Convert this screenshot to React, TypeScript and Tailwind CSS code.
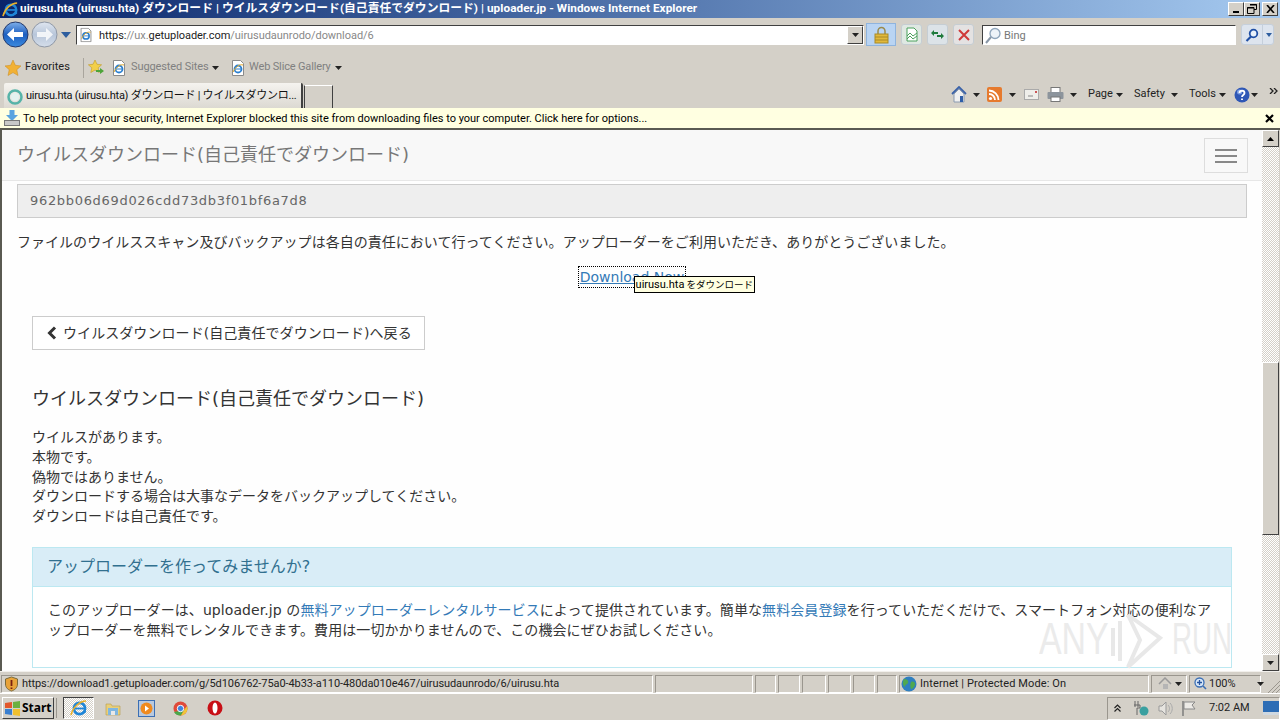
import { ReactNode } from "react";

const raised = "bg-[#d4d0c8] border border-t-white border-l-white border-r-[#404040] border-b-[#404040]";
const sunken = "border border-t-[#9a968e] border-l-[#9a968e] border-r-white border-b-white";
const field = "bg-white border border-t-[#404040] border-l-[#404040] border-r-white border-b-white";

const Caret = ({ className = "" }: { className?: string }) => (
    <svg width="7" height="4" viewBox="0 0 7 4" className={`shrink-0 ${className}`}>
        <path d="M0 0h7L3.500 4z" fill="#222" />
    </svg>
);

const IePage = () => (
    <svg width="16" height="16" viewBox="0 0 16 16" className="shrink-0">
        <path d="M2.500.5h8l3 3v12h-11z" fill="#fff" stroke="#8a8a8a" />
        <circle cx="8" cy="9" r="3.500" fill="none" stroke="#2a7fd0" strokeWidth="1.800" />
        <path d="M4.500 9h7" stroke="#2a7fd0" />
        <path d="M3 12C6 6 10 4 13 5" stroke="#e5a823" fill="none" />
    </svg>
);

const IeLogo = ({ size = 18 }: { size?: number }) => (
    <svg width={size} height={size} viewBox="0 0 18 18" className="shrink-0">
        <circle cx="9.500" cy="9.500" r="5.600" fill="none" stroke="#1f86d8" strokeWidth="2.600" />
        <path d="M4 9.500h11" stroke="#1f86d8" strokeWidth="1.800" />
        <path d="M12 13l4-1v1.500l-5 2z" fill="#1f86d8" />
        <path d="M1 16C3 8 10 2 16 2" stroke="#e9b02a" strokeWidth="1.600" fill="none" />
    </svg>
);

const NavButton = ({ dir, faded }: { dir: "l" | "r"; faded?: boolean }) => (
    <svg width="27" height="27" viewBox="0 0 27 27" className="shrink-0">
        <defs>
            <linearGradient id={"nb" + dir} x1="0" y1="0" x2="0" y2="1">
                <stop offset="0" stopColor={faded ? "#dfe6f0" : "#7fb0ea"} />
                <stop offset="0.5" stopColor={faded ? "#b8c6da" : "#1d5fc0"} />
                <stop offset="1" stopColor={faded ? "#d5deea" : "#3c8be0"} />
            </linearGradient>
        </defs>
        <circle cx="13.500" cy="13.500" r="12.500" fill={`url(#nb${dir})`} stroke={faded ? "#8f98a6" : "#23386a"} />
        <path
            d={dir === "l" ? "M5 13.500l7-6.500v4h9v5h-9v4z" : "M22 13.500l-7-6.500v4H6v5h9v4z"}
            fill="#fff"
            fillOpacity={faded ? 0.8 : 1}
        />
    </svg>
);

const ToolSquare = ({ children, tint = "bg-[#dce3e8]" }: { children: ReactNode; tint?: string }) => (
    <div className={`w-[21px] h-[21px] rounded-[3px] border border-[#c5cdd3] flex items-center justify-center ${tint}`}>
        {children}
    </div>
);

const TitleBar = () => (
    <div className="h-[18px] bg-gradient-to-r from-[#0a246a] to-[#a6caf0] flex items-center pl-[2px] pr-[2px] shrink-0">
        <IeLogo size={17} />
        <span className="ml-[1px] text-white font-bold text-[11.75px] whitespace-nowrap leading-none tracking-[0.05px]">
            uirusu.hta (uirusu.hta) ダウンロード | ウイルスダウンロード(自己責任でダウンロード) | uploader.jp - Windows Internet Explorer
        </span>
        <div className="ml-auto flex items-center">
            <div className={`w-4 h-[14px] ${raised} flex items-end justify-center pb-[2px]`}>
                <div className="w-[6px] h-[2px] bg-black" />
            </div>
            <div className={`w-4 h-[14px] ${raised} flex items-center justify-center`}>
                <svg width="10" height="10" viewBox="0 0 10 10">
                    <path d="M3 .5h6.500v5H7M.5 3.500h6.500v6H.5z" fill="none" stroke="#000" />
                    <path d="M3 1h7M0 4h7" stroke="#000" strokeWidth="1" />
                </svg>
            </div>
            <div className={`ml-[2px] w-4 h-[14px] ${raised} flex items-center justify-center`}>
                <svg width="9" height="8" viewBox="0 0 9 8">
                    <path d="M1 0l7 8M8 0L1 8" stroke="#000" strokeWidth="1.600" />
                </svg>
            </div>
        </div>
    </div>
);

const AddressRow = () => (
    <div className="h-[33px] pt-[3px] flex items-start pl-[2px] shrink-0">
        <NavButton dir="l" />
        <div className="ml-[2px]">
            <NavButton dir="r" faded />
        </div>
        <svg width="10" height="6" viewBox="0 0 10 6" className="ml-[3px] mt-[11px] shrink-0">
            <path d="M0 0h10L5 6z" fill="#2d5d9e" />
        </svg>
        <div className={`ml-[5px] w-[788px] h-[20px] mt-[4px] ${field} flex items-center relative`}>
            <div className="ml-[1px] scale-90">
                <IePage />
            </div>
            <span className="ml-[5px] mt-[2px] text-[11px] text-[#888] tracking-[-0.05px]">
                <span className="text-[#222]">https:</span>//ux.<span className="text-[#222]">getuploader.com</span>/uirusudaunrodo/download/6
            </span>
            <div className={`absolute right-0 top-0 w-4 h-[18px] ${raised} flex items-center justify-center`}>
                <Caret />
            </div>
        </div>
        <div className="ml-[2px] w-[30px] h-[23px] mt-[2px] bg-[#b9d4f3] border border-[#8fb4de] flex items-center justify-center">
            <svg width="15" height="18" viewBox="0 0 15 18">
                <path d="M4 8V5a3.500 3.500 0 0 1 7 0v3" fill="none" stroke="#9a8a4c" strokeWidth="1.500" />
                <rect x="1" y="8" width="13" height="9" fill="#e2b93b" stroke="#a98a28" />
                <path d="M1 11h13M1 14h13" stroke="#a98a28" />
            </svg>
        </div>
        <div className="ml-[5px] mt-[3px] flex gap-[5px]">
            <ToolSquare tint="bg-[#dfe8e2]">
                <svg width="14" height="15" viewBox="0 0 14 15">
                    <path d="M2 1h7l3 3v10H2z" fill="#fff" stroke="#4aa05c" />
                    <path d="M2 9l3-3 3 3 4-3M2 12l3-3 3 3 4-3" stroke="#4aa05c" fill="none" />
                </svg>
            </ToolSquare>
            <ToolSquare>
                <svg width="15" height="13" viewBox="0 0 15 13">
                    <path d="M1 5l3-3v2h4v2H4v2zM14 8l-3 3V9H7V7h4V5z" fill="#1f7a3c" />
                </svg>
            </ToolSquare>
            <ToolSquare tint="bg-[#e4e2e2]">
                <svg width="12" height="12" viewBox="0 0 12 12">
                    <path d="M1 1l10 10M11 1L1 11" stroke="#cf3a3a" strokeWidth="2" />
                </svg>
            </ToolSquare>
        </div>
        <div className={`ml-[8px] w-[254px] h-[20px] mt-[4px] ${field} flex items-center`}>
            <svg width="18" height="17" viewBox="0 0 18 17" className="ml-[1px]">
                <circle cx="11" cy="6.500" r="5" fill="#eef3f8" stroke="#8fa5bb" strokeWidth="1.300" />
                <path d="M7 10l-5 6" stroke="#8a98a8" strokeWidth="2" />
            </svg>
            <span className="ml-[2px] mt-[2px] text-[11px] text-[#777]">Bing</span>
        </div>
        <div className="ml-[5px] mt-[3px] w-[33px] h-[21px] rounded-[3px] border border-[#c5cfdb] bg-[#dde4ee] flex items-center">
            <div className="w-[21px] flex justify-center border-r border-[#c5cfdb] h-full items-center">
                <svg width="14" height="14" viewBox="0 0 14 14">
                    <circle cx="8.500" cy="5.500" r="3.800" fill="#e9f1fb" stroke="#1f4fa5" strokeWidth="1.800" />
                    <path d="M6 8.500L1.500 13" stroke="#1f4fa5" strokeWidth="2.200" />
                </svg>
            </div>
            <svg width="6" height="4" viewBox="0 0 6 4" className="ml-[3px]">
                <path d="M0 0h6L3 4z" fill="#2d5d9e" />
            </svg>
        </div>
    </div>
);

const FavoritesRow = () => (
    <div className="h-[33px] flex items-center pl-[5px] text-[11px] shrink-0">
        <svg width="16" height="16" viewBox="0 0 16 16" className="shrink-0">
            <path d="M8 0l2.400 5.300 5.600.6-4.200 3.800 1.200 5.800L8 12.600l-5 2.900 1.200-5.800L0 5.900l5.600-.6z" fill="#f2b134" stroke="#c98a20" strokeWidth="0.500" />
        </svg>
        <span className="ml-[4px] w-[46px] text-[#222]">Favorites</span>
        <div className="ml-[12px] w-[1px] h-[20px] bg-[#a9a59d]" />
        <svg width="17" height="17" viewBox="0 0 17 17" className="ml-[4px] shrink-0">
            <path d="M7 1l2 4.300 4.600.5-3.400 3 1 4.700L7 11.100l-4.200 2.400 1-4.700-3.400-3 4.600-.5z" fill="#f2cf4a" stroke="#c09a26" strokeWidth="0.600" />
            <path d="M8 11h4V9l4 3-4 3v-2H8z" fill="#4da43a" />
        </svg>
        <div className="ml-[6px]">
            <IePage />
        </div>
        <span className="ml-[4px] w-[78px] text-[#808080] whitespace-nowrap tracking-[-0.1px]">Suggested Sites</span>
        <Caret className="ml-[3px]" />
        <div className="ml-[11px]">
            <IePage />
        </div>
        <span className="ml-[3px] w-[83px] text-[#808080] whitespace-nowrap tracking-[-0.15px]">Web Slice Gallery</span>
        <Caret className="ml-[3px]" />
    </div>
);

const TabsRow = () => (
    <div className="h-[24px] flex items-end justify-between shrink-0">
        <div className="flex items-end h-full pl-[4px]">
            <div className="w-[299px] h-[25px] pt-[2px] bg-gradient-to-b from-[#f5f3ef] to-[#dcd9d2] border-r-2 border-[#404040] flex items-center pl-[3px] rounded-t-[2px]">
                <svg width="16" height="16" viewBox="0 0 16 16" className="shrink-0">
                    <circle cx="8" cy="8" r="6.500" fill="none" stroke="#56b3a8" strokeWidth="2.500" />
                    <circle cx="8" cy="8" r="4" fill="#e3f2ef" />
                </svg>
                <span className="ml-[3px] text-[11px] text-[#111] whitespace-nowrap tracking-[-0.25px]">uirusu.hta (uirusu.hta) ダウンロード | ウイルスダウンロ...</span>
            </div>
            <div className="ml-[1px] w-[29px] h-[23px] border-x border-t border-x-[#404040] border-t-white bg-[#d4d0c8]" />
        </div>
        <div className="flex items-center h-full text-[11px] text-[#222] pb-[3px]">
            <svg width="16" height="17" viewBox="0 0 16 17" className="shrink-0">
                <path d="M1 8l7-7 7 7" fill="none" stroke="#3a62a8" strokeWidth="1.800" />
                <path d="M3 8v8h10V8L8 3z" fill="#f0f0f0" stroke="#8a9ab0" />
                <rect x="9" y="10" width="3" height="6" fill="#2f5ea8" />
            </svg>
            <Caret className="ml-[6px]" />
            <svg width="15" height="15" viewBox="0 0 15 15" className="ml-[7px] shrink-0">
                <rect width="15" height="15" rx="2" fill="#e67a2e" />
                <circle cx="3.500" cy="11.500" r="1.600" fill="#fff" />
                <path d="M2 7a6 6 0 0 1 6 6M2 3.500a9.500 9.500 0 0 1 9.500 9.500" stroke="#fff" strokeWidth="1.800" fill="none" />
            </svg>
            <Caret className="ml-[7px]" />
            <svg width="15" height="11" viewBox="0 0 15 11" className="ml-[8px] shrink-0">
                <rect x="0.500" y="0.500" width="14" height="10" fill="#efeeea" stroke="#aaa" />
                <path d="M4 7h5" stroke="#888" />
                <rect x="11" y="2" width="2" height="2" fill="#c55" />
            </svg>
            <svg width="17" height="15" viewBox="0 0 17 15" className="ml-[8px] shrink-0">
                <rect x="4" y="0.500" width="9" height="5" fill="#fff" stroke="#777" />
                <rect x="0.500" y="5" width="16" height="7" rx="1" fill="#8c949c" />
                <rect x="4" y="10" width="9" height="4.500" fill="#fff" stroke="#777" />
            </svg>
            <Caret className="ml-[6px]" />
            <span className="ml-[11px] w-[25px]">Page</span>
            <Caret className="ml-[3px]" />
            <span className="ml-[11px] w-[33px]">Safety</span>
            <Caret className="ml-[4px]" />
            <span className="ml-[11px] w-[26px]">Tools</span>
            <Caret className="ml-[4px]" />
            <svg width="16" height="16" viewBox="0 0 16 16" className="ml-[8px] shrink-0">
                <circle cx="8" cy="8" r="7.500" fill="#2f57b5" />
                <circle cx="5.500" cy="5" r="2.500" fill="#7ea0e6" />
                <path d="M5.500 6c0-3 5-3 5 0 0 2-2.500 2-2.500 4M8 11.500v1.500" fill="none" stroke="#fff" strokeWidth="1.800" />
            </svg>
            <Caret className="ml-[1px]" />
            <svg width="9" height="6" viewBox="0 0 9 6" className="ml-[11px] mr-[2px] -mt-[7px] shrink-0">
                <path d="M1 0l3 3-3 3M5 0l3 3-3 3" fill="none" stroke="#222" strokeWidth="1.300" />
            </svg>
        </div>
    </div>
);

const InfoBar = () => (
    <div className="h-[22px] bg-[#ffffe1] border-b-2 border-[#5a5a52] flex items-center pl-[4px] pr-[4px] shrink-0">
        <svg width="16" height="16" viewBox="0 0 16 16" className="shrink-0">
            <path d="M5.500 0h5v5H14l-6 6-6-6h3.500z" fill="#5aa4e0" />
            <rect x="0.500" y="10.500" width="15" height="5" fill="#c8c8c8" stroke="#777" />
        </svg>
        <span className="ml-[3px] mt-[3px] text-[11px] text-black whitespace-nowrap">
            To help protect your security, Internet Explorer blocked this site from downloading files to your computer. Click here for options...
        </span>
        <svg width="9" height="9" viewBox="0 0 9 9" className="ml-auto mr-[2px] shrink-0">
            <path d="M1 1l7 7M8 1L1 8" stroke="#000" strokeWidth="2.200" />
        </svg>
    </div>
);

const Scrollbar = () => (
    <div className="w-[17px] mr-[1px] flex flex-col shrink-0 bg-[repeating-conic-gradient(#d4d0c8_0_25%,#fff_0_50%)] bg-[length:2px_2px]">
        <div className={`h-[17px] ${raised} flex items-center justify-center`}>
            <svg width="7" height="4" viewBox="0 0 7 4">
                <path d="M0 4h7L3.500 0z" fill="#000" />
            </svg>
        </div>
        <div className={`mt-[215px] h-[173px] ${raised}`} />
        <div className={`mt-auto h-[17px] ${raised} flex items-center justify-center`}>
            <Caret />
        </div>
    </div>
);

const PageContent = () => (
    <div className="flex-1 min-w-0 bg-[#fefefe] overflow-hidden relative text-[#333] text-[14px] leading-[20px] font-['DejaVu_Sans','Noto_Sans_CJK_JP',sans-serif]">
        <div className="h-[51px] bg-[#f8f8f8] border-b border-[#e7e7e7] flex items-center justify-between pl-[15px] pr-[14px]">
            <span className="text-[18px] text-[#777] leading-[20px]">ウイルスダウンロード(自己責任でダウンロード)</span>
            <div className="w-[44px] h-[35px] mt-[1px] border border-[#ddd] flex flex-col items-center justify-center gap-[4px]">
                <div className="w-[22px] h-[2px] bg-[#888]" />
                <div className="w-[22px] h-[2px] bg-[#888]" />
                <div className="w-[22px] h-[2px] bg-[#888]" />
            </div>
        </div>
        <div className="mx-[15px] mt-[3px] h-[34px] bg-[#eeeeee] border border-[#ccc] flex items-center pl-[12px] text-[13px] text-[#666] tracking-[0.68px]">
            962bb06d69d026cdd73db3f01bf6a7d8
        </div>
        <p className="ml-[15px] mt-[14px] tracking-[0.03px]">ファイルのウイルススキャン及びバックアップは各自の責任において行ってください。アップローダーをご利用いただき、ありがとうございました。</p>
        <div className="mt-[14px] flex justify-center">
            <div className="relative">
                <a className="block px-[1px] border border-dotted border-black text-[#337ab7] underline">Download Now</a>
                <div className="absolute left-[56px] top-[10px] h-[17px] w-[121px] bg-[#ffffe1] border border-black flex items-center justify-center text-[11px] leading-none text-black whitespace-nowrap font-['Roboto','Noto_Sans_CJK_JP',sans-serif]">
                    uirusu.hta <span className="ml-[2px] text-[9.5px]">をダウンロード</span>
                </div>
            </div>
        </div>
        <div className="pl-[30px] pr-[30px]">
            <button className="mt-[28px] h-[34px] w-[393px] bg-white border border-[#ccc] flex items-center pl-[14px]">
                <svg width="10" height="14" viewBox="0 0 10 14">
                    <path d="M8 1.500L2.500 7 8 12.500" fill="none" stroke="#333" strokeWidth="3" />
                </svg>
                <span className="ml-[6px] tracking-[0.07px]">ウイルスダウンロード(自己責任でダウンロード)へ戻る</span>
            </button>
            <h3 className="mt-[39px] text-[18px] leading-[20px] text-[#333]">ウイルスダウンロード(自己責任でダウンロード)</h3>
            <p className="mt-[19px] leading-[19.8px]">
                ウイルスがあります。
                <br />
                本物です。
                <br />
                偽物ではありません。
                <br />
                ダウンロードする場合は大事なデータをバックアップしてください。
                <br />
                ダウンロードは自己責任です。
            </p>
            <div className="mt-[20px] border border-[#bce8f1] bg-white">
                <div className="h-[39px] bg-[#d9edf7] border-b border-[#bce8f1] flex items-center pl-[14px] text-[16px] text-[#31708f]">
                    アップローダーを作ってみませんか?
                </div>
                <div className="px-[15px] pt-[13px] pb-[27px] tracking-[0.08px] whitespace-nowrap">
                    <p>
                        このアップローダーは、uploader.jp の<span className="text-[#337ab7]">無料アップローダーレンタルサービス</span>によって提供されています。簡単な<span className="text-[#337ab7]">無料会員登録</span>を行っていただくだけで、スマートフォン対応の便利なア
                    </p>
                    <p>ップローダーを無料でレンタルできます。費用は一切かかりませんので、この機会にぜひお試しください。</p>
                </div>
            </div>
        </div>
        {/* watermark over the page */}
        <div className="absolute left-[1037px] top-[482px] h-[58px] flex items-center text-[#ebebeb] text-[44px] leading-none font-['Liberation_Sans',sans-serif] pointer-events-none">
            <span className="scale-x-[0.77] origin-left w-[71px] shrink-0 -mt-[4px]">ANY</span>
            <svg width="54" height="58" viewBox="0 0 54 58" className="shrink-0">
                <path d="M3 16v28M10 9v40M18 3l32 23-32 29 12-27z" fill="none" stroke="#e8e8e8" strokeWidth="4" />
            </svg>
            <span className="scale-x-[0.63] origin-left ml-[8px] w-[60px] shrink-0 -mt-[4px]">RUN</span>
        </div>
    </div>
);

const Cell = ({ w, children }: { w: string; children?: ReactNode }) => (
    <div className={`${w} h-[18px] ${sunken} flex items-center shrink-0`}>{children}</div>
);

const StatusBar = () => (
    <div className="h-[22px] flex items-center gap-[2px] pl-[1px] pt-[2px] text-[11px] text-[#222] border-t border-[#f2f0ec] shrink-0">
        <Cell w="w-[652px]">
            <svg width="15" height="16" viewBox="0 0 15 16" className="ml-[2px] shrink-0">
                <path d="M7.500 1l6 2v5c0 4-3 6-6 7-3-1-6-3-6-7V3z" fill="#e8a33a" stroke="#7a6a3a" />
                <path d="M7.500 4v6M7.500 11.500v1.500" stroke="#7a1f10" strokeWidth="1.800" />
            </svg>
            <span className="ml-[3px] mt-[1px] whitespace-nowrap tracking-[-0.08px]">https://download1.getuploader.com/g/5d106762-75a0-4b33-a110-480da010e467/uirusudaunrodo/6/uirusu.hta</span>
        </Cell>
        <Cell w="w-[98px]" />
        <Cell w="w-[21px]" />
        <Cell w="w-[22px]" />
        <Cell w="w-[24px]" />
        <Cell w="w-[23px]" />
        <Cell w="w-[22px]" />
        <Cell w="w-[20px]" />
        <Cell w="w-[250px]">
            <svg width="16" height="16" viewBox="0 0 16 16" className="ml-[1px] shrink-0">
                <circle cx="8" cy="8" r="7.500" fill="#2f7fc0" />
                <path d="M3 3c3 0 5 2 4 4s-3 1-3 4c-2-1-3-5-1-8zM10 6c2-1 4 0 4 2s-2 5-4 5c-1-2-1-5 0-7z" fill="#4fa84f" />
            </svg>
            <span className="ml-[3px] mt-[1px] whitespace-nowrap tracking-[0.1px]">Internet | Protected Mode: On</span>
        </Cell>
        <Cell w="w-[36px]">
            <svg width="14" height="14" viewBox="0 0 14 14" className="ml-[6px] shrink-0">
                <path d="M1 7l6-6 6 6" fill="none" stroke="#9a9a9a" strokeWidth="1.500" />
                <rect x="5" y="7" width="5" height="5" fill="#b5b5b5" />
            </svg>
            <Caret className="ml-[3px]" />
        </Cell>
        <Cell w="w-[72px]">
            <svg width="13" height="13" viewBox="0 0 13 13" className="ml-[4px] shrink-0">
                <circle cx="5.500" cy="5.500" r="4.500" fill="#d9e8f8" stroke="#3b6fb5" strokeWidth="1.300" />
                <path d="M3 5.500h5M5.500 3v5" stroke="#2453a0" strokeWidth="1.300" />
                <path d="M9 9l3 3" stroke="#3b6fb5" strokeWidth="1.600" />
            </svg>
            <span className="ml-[2px] mt-[1px]">100%</span>
            <Caret className="ml-[21px]" />
        </Cell>
        <svg width="14" height="14" viewBox="0 0 14 14" className="ml-auto self-end shrink-0">
            <path d="M14 2L2 14M14 6l-8 8M14 10l-4 4" stroke="#9a968e" />
        </svg>
    </div>
);

const Taskbar = () => (
    <div className="flex-1 border-t border-white flex items-center pl-[2px] pt-[2px] text-black">
        <div className={`w-[52px] h-[22px] ${raised} flex items-center pl-[1px]`}>
            <svg width="17" height="15" viewBox="0 0 17 15" className="shrink-0">
                <path d="M1 2l7-1v6H1z" fill="#e2572b" />
                <path d="M9 1l7-1v7H9z" fill="#6bb03f" />
                <path d="M1 8h7v6l-7-1z" fill="#3a7fd0" />
                <path d="M9 8h7v7l-7-1z" fill="#f0c030" />
            </svg>
            <span className="ml-[1px] text-[12px] font-bold font-['Noto_Sans',sans-serif] leading-none">Start</span>
        </div>
        <div className="ml-[2px] w-[1px] h-[20px] bg-[#9a968e]" />
        <div className="ml-[6px] w-[31px] h-[22px] bg-[repeating-conic-gradient(#d4d0c8_0_25%,#fff_0_50%)] bg-[length:2px_2px] border border-t-[#404040] border-l-[#404040] border-r-white border-b-white flex items-center justify-center">
            <IeLogo />
        </div>
        <svg width="16" height="15" viewBox="0 0 16 15" className="ml-[11px] shrink-0">
            <path d="M1 3h5l1 2h8v9H1z" fill="#e8cf7a" stroke="#b79a4a" strokeWidth="0.600" />
            <rect x="3" y="7" width="10" height="7" fill="#7fb6e0" />
            <rect x="6" y="10" width="4" height="4" fill="#e8e8e8" />
        </svg>
        <div className="ml-[17px] w-[17px] h-[17px] bg-[#b9c9de] border border-[#3b6fb5] flex items-center justify-center">
            <svg width="13" height="13" viewBox="0 0 13 13">
                <circle cx="6.500" cy="6.500" r="6" fill="#ef8a1f" />
                <path d="M5 3.500l4 3-4 3z" fill="#fff" />
            </svg>
        </div>
        <svg width="15" height="15" viewBox="0 0 15 15" className="ml-[18px] shrink-0">
            <circle cx="7.500" cy="7.500" r="7" fill="#e04a3a" />
            <path d="M1 11a7.500 7.500 0 0 0 7 3.500L11 9z" fill="#4aa84a" />
            <path d="M14 5a7 7 0 0 1-6 9.500L11 9z" fill="#f0c53a" />
            <circle cx="7.500" cy="7.500" r="3.200" fill="#3f83e0" stroke="#fff" />
        </svg>
        <svg width="16" height="16" viewBox="0 0 16 16" className="ml-[19px] shrink-0">
            <circle cx="8" cy="8" r="7.500" fill="#c80f16" />
            <ellipse cx="8" cy="8" rx="2.500" ry="5.500" fill="#fff" />
        </svg>
        <div className={`ml-auto w-[173px] h-[23px] ${sunken} flex items-center text-[11px] text-[#222]`}>
            <svg width="7" height="8" viewBox="0 0 7 8" className="ml-[6px] shrink-0">
                <path d="M.5 4l3-3 3 3M.5 7.500l3-3 3 3" fill="none" stroke="#222" strokeWidth="1.200" />
            </svg>
            <svg width="16" height="16" viewBox="0 0 16 16" className="ml-[12px] shrink-0">
                <path d="M2 1v6M5 1v6M1 5h6v3H4v7" stroke="#666" fill="none" />
                <circle cx="11" cy="11" r="4.500" fill="#3aa0a0" />
            </svg>
            <svg width="16" height="15" viewBox="0 0 16 15" className="ml-[8px] shrink-0">
                <path d="M2 5h3l4-4v13l-4-4H2z" fill="#e6e4df" stroke="#999" />
                <path d="M11 4c2 2 2 5 0 7M13 2c3 3 3 8 0 11" stroke="#aaa" fill="none" />
            </svg>
            <svg width="15" height="16" viewBox="0 0 15 16" className="ml-[8px] shrink-0">
                <path d="M2 1v15" stroke="#777" strokeWidth="1.400" />
                <path d="M3 2h11l-3 3 3 4H3z" fill="#eceae6" stroke="#888" />
            </svg>
            <span className="ml-[13px] w-[44px] whitespace-nowrap">7:02 AM</span>
            <svg width="16" height="14" viewBox="0 0 16 14" className="ml-[10px] shrink-0">
                <rect width="16" height="14" fill="#2d6db5" />
                <rect y="11" width="16" height="3" fill="#cfd8e0" />
            </svg>
        </div>
    </div>
);

const App = () => (
    <div className="w-[1280px] h-[720px] overflow-hidden bg-[#d4d0c8] flex flex-col font-['Roboto','Noto_Sans_CJK_JP',sans-serif]">
        <TitleBar />
        <AddressRow />
        <FavoritesRow />
        <TabsRow />
        <InfoBar />
        <div className="h-[541px] flex border-l-2 border-[#5a5a52] shrink-0">
            <PageContent />
            <Scrollbar />
        </div>
        <StatusBar />
        <Taskbar />
    </div>
);

export default App;
